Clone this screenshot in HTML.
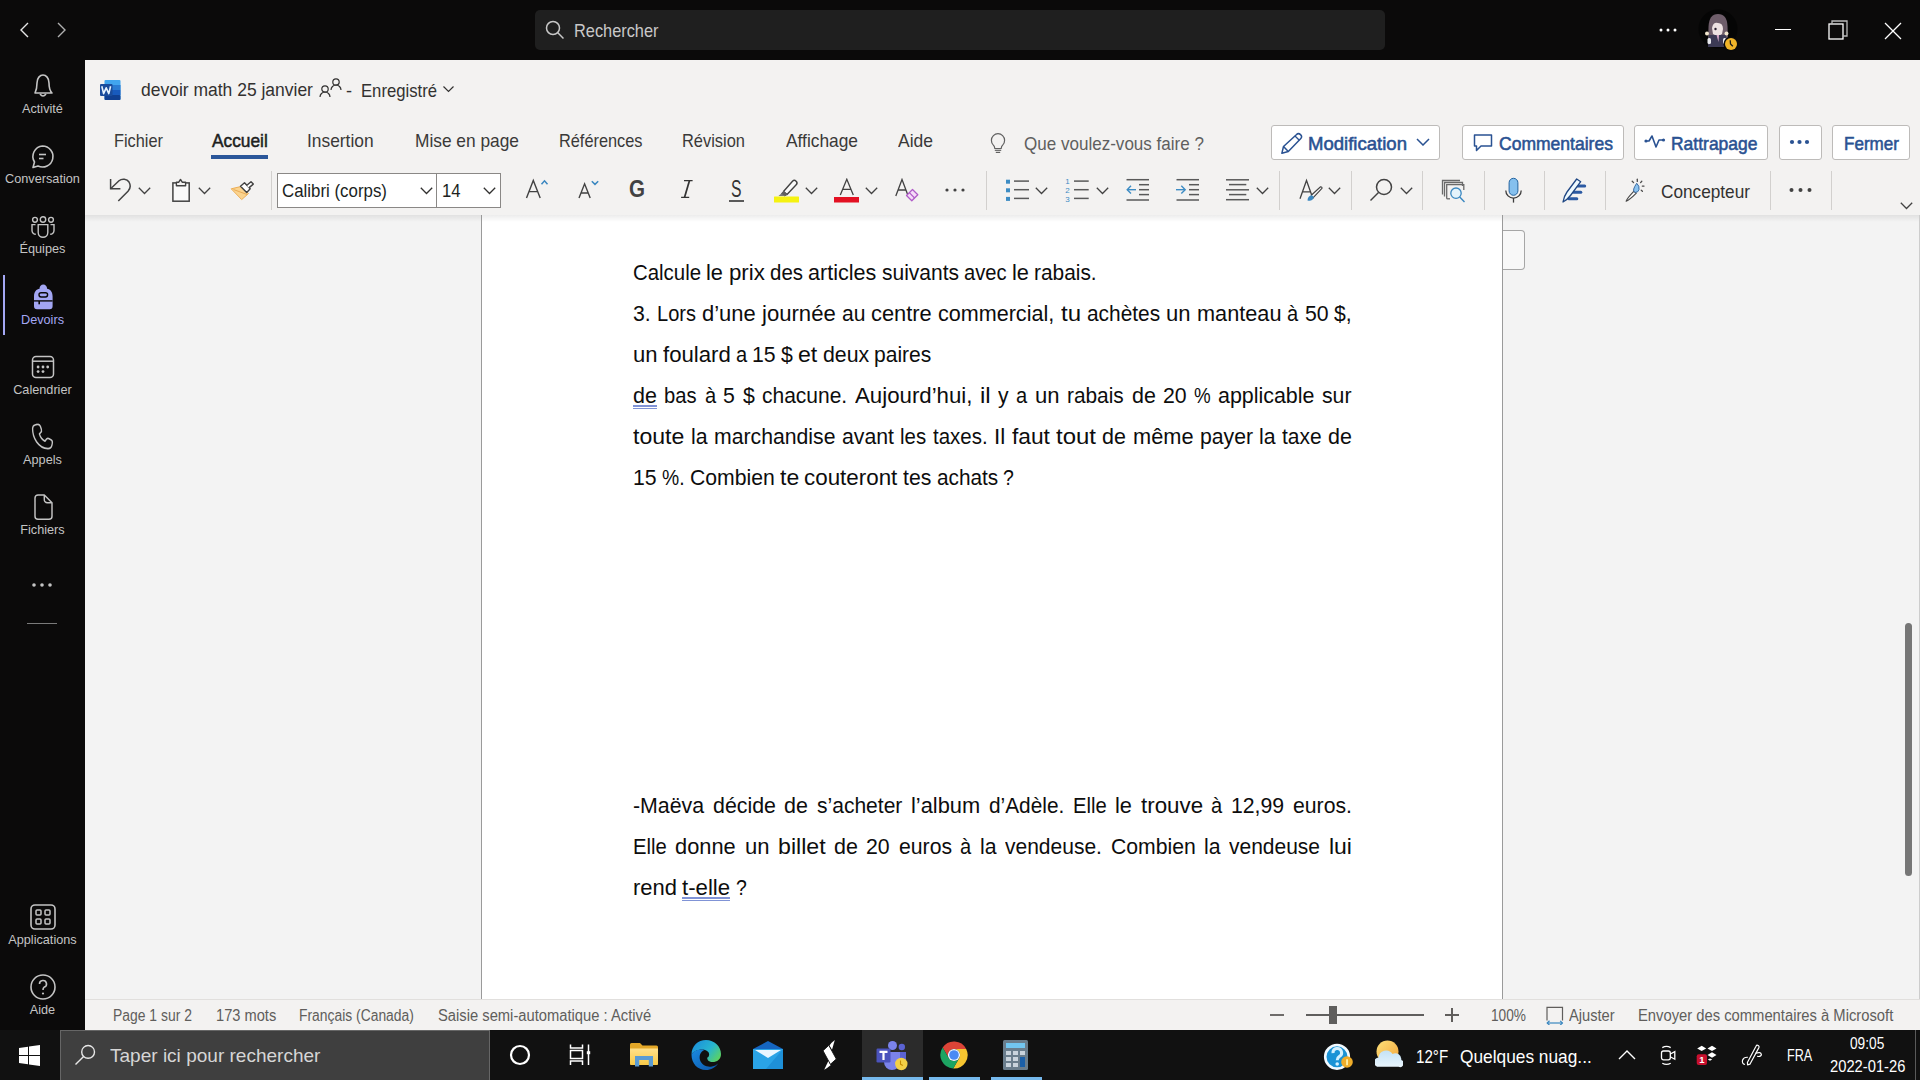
<!DOCTYPE html>
<html><head><meta charset="utf-8"><style>
html,body{margin:0;padding:0;width:1920px;height:1080px;overflow:hidden;background:#0a0a0a;}
body{position:relative;font-family:"Liberation Sans",sans-serif;}
.t{position:absolute;white-space:nowrap;transform-origin:0 0;}
.r{position:absolute;}
</style></head><body>
<div class="r" style="left:0px;top:0px;width:1920px;height:60px;background:#0b0a0a;"></div>
<div class="r" style="left:0px;top:60px;width:85px;height:970px;background:#0b0a0a;"></div>
<div class="r" style="left:85px;top:60px;width:1835px;height:155px;background:#f3f2f1;"></div>
<div class="r" style="left:85px;top:215px;width:1835px;height:784px;background:#f3f3f3;"></div>
<div class="r" style="left:481px;top:215px;width:1022px;height:784px;background:#ffffff;"></div>
<div class="r" style="left:85px;top:215px;width:1835px;height:7px;background:linear-gradient(rgba(0,0,0,0.075),rgba(0,0,0,0));"></div>
<div class="r" style="left:85px;top:999px;width:1835px;height:31px;background:#f3f2f1;"></div>
<div class="r" style="left:85px;top:999px;width:1835px;height:1px;background:#e1dfdd;"></div>
<div class="r" style="left:0px;top:1030px;width:1920px;height:50px;background:#111111;"></div>
<div class="r" style="left:535px;top:10px;width:850px;height:40px;background:#1f1f1f;border-radius:5px;"></div>
<svg class="r" style="left:545px;top:20px" width="20" height="20" viewBox="0 0 20 20"><circle cx="8" cy="8" r="6.5" fill="none" stroke="#c8c8c8" stroke-width="1.5"/><line x1="12.8" y1="12.8" x2="18.5" y2="18.5" stroke="#c8c8c8" stroke-width="1.5"/></svg>
<div class="t" style="left:573.80px;top:21.63px;font-size:18.16px;line-height:18.16px;color:#c8c8c8;transform:scaleX(0.9002);">Rechercher</div>
<svg class="r" style="left:18px;top:20px" width="14" height="20" viewBox="0 0 14 20"><polyline points="10,3 3,10 10,17" fill="none" stroke="#e6e6e6" stroke-width="1.4"/></svg>
<svg class="r" style="left:54px;top:20px" width="14" height="20" viewBox="0 0 14 20"><polyline points="4,3 11,10 4,17" fill="none" stroke="#b0b0b0" stroke-width="1.4"/></svg>
<svg class="r" style="left:1658px;top:26px" width="20" height="8" viewBox="0 0 20 8"><circle cx="3" cy="4" r="1.5" fill="#fff"/><circle cx="10" cy="4" r="1.5" fill="#fff"/><circle cx="17" cy="4" r="1.5" fill="#fff"/></svg>
<svg class="r" style="left:1698px;top:9px" width="40" height="40" viewBox="0 0 40 40"><circle cx="20" cy="20" r="19.5" fill="#050505"/><path d="M10 36 L10.5 18 Q11 5 20 5 Q29 5 29.5 17 L30 30 L26 36 Z" fill="#6e5d6a"/><path d="M14 19 Q15 13 20 14 Q25 14 25 20 L24 25 Q20 28 15 25 Z" fill="#eee2e2"/><circle cx="17.5" cy="20" r="1.2" fill="#2a2030"/><path d="M10 38 L11 26 L28 26 L29 38 Z" fill="#3c3a55"/><path d="M18.5 26 L21 26 L20.5 33 Z" fill="#d6a8c8"/><circle cx="9" cy="24.5" r="2" fill="#f2e6cf"/><circle cx="28.5" cy="24.5" r="2" fill="#f2e6cf"/><rect x="9.5" y="29" width="3.5" height="6" rx="1.5" fill="#e9e9ee"/><rect x="25" y="29" width="3.5" height="6" rx="1.5" fill="#e9e9ee"/></svg>
<svg class="r" style="left:1723px;top:36px" width="16" height="16" viewBox="0 0 16 16"><circle cx="8" cy="8" r="7.5" fill="#0a0a0a"/><circle cx="8" cy="8" r="6" fill="#f0b429"/><polyline points="7.2,4.2 7.5,8 9.8,10.2" fill="none" stroke="#1a1a1a" stroke-width="1.3"/></svg>
<div class="r" style="left:1775px;top:29px;width:16px;height:1px;background:#ffffff;"></div>
<svg class="r" style="left:1828px;top:20px" width="21" height="21" viewBox="0 0 21 21"><rect x="1" y="4" width="14" height="15" fill="none" stroke="#fff" stroke-width="1.3"/><path d="M4 4 V1 H19 V16 H15" fill="none" stroke="#bbb" stroke-width="1.3"/></svg>
<svg class="r" style="left:1884px;top:22px" width="18" height="18" viewBox="0 0 18 18"><line x1="1" y1="1" x2="17" y2="17" stroke="#fff" stroke-width="1.3"/><line x1="17" y1="1" x2="1" y2="17" stroke="#fff" stroke-width="1.3"/></svg>
<div class="t" style="left:22.03px;top:103.25px;font-size:12.7px;line-height:12.7px;color:#c4c4c4;">Activité</div>
<div class="t" style="left:5.08px;top:173.25px;font-size:12.7px;line-height:12.7px;color:#c4c4c4;">Conversation</div>
<div class="t" style="left:19.55px;top:243.25px;font-size:12.7px;line-height:12.7px;color:#c4c4c4;">Équipes</div>
<div class="t" style="left:20.97px;top:313.55px;font-size:12.7px;line-height:12.7px;color:#a4a7f4;">Devoirs</div>
<div class="t" style="left:13.20px;top:383.55px;font-size:12.7px;line-height:12.7px;color:#c4c4c4;">Calendrier</div>
<div class="t" style="left:23.08px;top:453.55px;font-size:12.7px;line-height:12.7px;color:#c4c4c4;">Appels</div>
<div class="t" style="left:20.27px;top:523.55px;font-size:12.7px;line-height:12.7px;color:#c4c4c4;">Fichiers</div>
<div class="t" style="left:8.26px;top:933.75px;font-size:12.7px;line-height:12.7px;color:#c4c4c4;">Applications</div>
<div class="t" style="left:29.79px;top:1003.75px;font-size:12.7px;line-height:12.7px;color:#c4c4c4;">Aide</div>
<div class="r" style="left:3px;top:275px;width:2px;height:60px;background:#a4a7f4;"></div>
<svg class="r" style="left:31px;top:73px" width="24" height="26" viewBox="0 0 24 26"><path d="M4 20 C5 18 6 16 6 10 C6 5 9 2 12 2 C15 2 18 5 18 10 C18 16 19 18 21 20 Z" fill="none" stroke="#c4c4c4" stroke-width="1.6" stroke-linejoin="round"/><path d="M9 21 Q12 25 15 21" fill="none" stroke="#c4c4c4" stroke-width="1.6"/></svg>
<svg class="r" style="left:30px;top:144px" width="25" height="26" viewBox="0 0 25 26"><path d="M12.5 2 A10.5 10.5 0 1 1 8 22 L3 23.5 L4.5 18 A10.5 10.5 0 0 1 12.5 2 Z" fill="none" stroke="#c4c4c4" stroke-width="1.6" stroke-linejoin="round"/><line x1="9" y1="10.5" x2="16" y2="10.5" stroke="#c4c4c4" stroke-width="1.6"/><line x1="9" y1="14.5" x2="13.5" y2="14.5" stroke="#c4c4c4" stroke-width="1.6"/></svg>
<svg class="r" style="left:29px;top:214px" width="28" height="26" viewBox="0 0 28 26"><circle cx="6" cy="5.8" r="2.4" fill="none" stroke="#c4c4c4" stroke-width="1.4"/><circle cx="14" cy="5.5" r="2.7" fill="none" stroke="#c4c4c4" stroke-width="1.4"/><circle cx="22" cy="5.8" r="2.4" fill="none" stroke="#c4c4c4" stroke-width="1.4"/><path d="M9.2 10.6 H18.8 V18.5 A4.8 4.8 0 0 1 9.2 18.5 Z" fill="none" stroke="#c4c4c4" stroke-width="1.4"/><path d="M6.5 10.6 H3 V16.5 A3.8 3.8 0 0 0 6.8 20.3" fill="none" stroke="#c4c4c4" stroke-width="1.4"/><path d="M21.5 10.6 H25 V16.5 A3.8 3.8 0 0 1 21.2 20.3" fill="none" stroke="#c4c4c4" stroke-width="1.4"/></svg>
<svg class="r" style="left:33px;top:283px" width="21" height="27" viewBox="0 0 21 27"><path d="M1 13.5 C1 8.5 3.5 6.3 6.5 5.8 C6.5 3.2 8.2 1.5 10.3 1.5 C12.4 1.5 14.1 3.2 14.1 5.8 C17.1 6.3 19.6 8.5 19.6 13.5 V23.3 A3 3 0 0 1 16.6 26.3 H4 A3 3 0 0 1 1 23.3 Z" fill="#a3a6f3"/><rect x="6" y="9.7" width="8.6" height="4.3" rx="2.15" fill="#a3a6f3" stroke="#0b0a0a" stroke-width="1.4"/><rect x="1" y="17.2" width="18.6" height="1.4" fill="#0b0a0a"/><rect x="5.4" y="18" width="1.6" height="3.3" fill="#0b0a0a"/></svg>
<svg class="r" style="left:31px;top:355px" width="24" height="24" viewBox="0 0 24 24"><rect x="1.5" y="1.5" width="21" height="21" rx="3.5" fill="none" stroke="#c4c4c4" stroke-width="1.5"/><line x1="1.5" y1="6.2" x2="22.5" y2="6.2" stroke="#c4c4c4" stroke-width="1.5"/><circle cx="7.1" cy="12" r="1.4" fill="#c4c4c4"/><circle cx="12" cy="12" r="1.4" fill="#c4c4c4"/><circle cx="16.7" cy="12" r="1.4" fill="#c4c4c4"/><circle cx="7.1" cy="16.6" r="1.4" fill="#c4c4c4"/><circle cx="12" cy="16.6" r="1.4" fill="#c4c4c4"/></svg>
<svg class="r" style="left:30px;top:422px" width="24" height="30" viewBox="0 0 24 30"><g transform="translate(-0.5,-1.6) scale(1,1.27)"><path d="M7.5 3.2 Q10 2.6 10.9 4.7 L11.9 7.1 Q12.4 8.6 11.1 9.6 L9.9 10.7 Q10.6 12.6 12.1 14.1 Q13.6 15.6 15.5 16.3 L16.6 15.1 Q17.6 13.8 19.1 14.3 L21.4 15.3 Q23.3 16.1 22.8 18.1 L22.4 19.6 Q21.7 22.3 18.5 22.3 Q11.5 21.9 7.1 16.9 Q3.1 12.4 3.1 6.6 Q3.1 4.1 5.5 3.6 Z" fill="none" stroke="#c4c4c4" stroke-width="1.35" stroke-linejoin="round"/></g></svg>
<svg class="r" style="left:32px;top:494px" width="22" height="27" viewBox="0 0 22 27"><path d="M3 4 A3 3 0 0 1 6 1 H12.3 L20 8.8 V22.2 A3 3 0 0 1 17 25.2 H6 A3 3 0 0 1 3 22.2 Z" fill="none" stroke="#c4c4c4" stroke-width="1.45" stroke-linejoin="round"/><path d="M12.3 1 V5.6 A3 3 0 0 0 15.3 8.8 H20" fill="none" stroke="#c4c4c4" stroke-width="1.45"/></svg>
<svg class="r" style="left:32px;top:581px" width="22" height="8" viewBox="0 0 22 8"><circle cx="2" cy="4" r="1.8" fill="#c4c4c4"/><circle cx="10" cy="4" r="1.8" fill="#c4c4c4"/><circle cx="18" cy="4" r="1.8" fill="#c4c4c4"/></svg>
<div class="r" style="left:27px;top:623px;width:30px;height:1px;background:#7a7a7a;"></div>
<svg class="r" style="left:30px;top:904px" width="26" height="26" viewBox="0 0 26 26"><rect x="1" y="1" width="24" height="24" rx="4" fill="none" stroke="#c4c4c4" stroke-width="1.6"/><rect x="6" y="6" width="5" height="5" rx="1" fill="none" stroke="#c4c4c4" stroke-width="1.5"/><rect x="15" y="6" width="5" height="5" rx="1" fill="none" stroke="#c4c4c4" stroke-width="1.5"/><rect x="6" y="15" width="5" height="5" rx="1" fill="none" stroke="#c4c4c4" stroke-width="1.5"/><rect x="15" y="15" width="5" height="5" rx="1" fill="none" stroke="#c4c4c4" stroke-width="1.5"/></svg>
<svg class="r" style="left:30px;top:974px" width="26" height="26" viewBox="0 0 26 26"><circle cx="13" cy="13" r="12" fill="none" stroke="#c4c4c4" stroke-width="1.6"/><path d="M9.5 10 A3.5 3.5 0 1 1 14 13.3 Q13 14 13 16" fill="none" stroke="#c4c4c4" stroke-width="1.6"/><circle cx="13" cy="19.5" r="1.1" fill="#c4c4c4"/></svg>
<svg class="r" style="left:100px;top:80px" width="21" height="20" viewBox="0 0 21 20"><rect x="4.5" y="0" width="16" height="20" rx="1" fill="#41a5ee"/><rect x="4.5" y="5" width="16" height="5" fill="#2b7cd3"/><rect x="4.5" y="10" width="16" height="5" fill="#185abd"/><rect x="4.5" y="15" width="16" height="5" rx="1" fill="#103f91"/><rect x="0" y="4" width="12.5" height="12" rx="1" fill="#1a4c9c"/><path d="M1.8 6.2 L3.6 13.6 L6.2 7.8 L8.8 13.6 L10.6 6.2" fill="none" stroke="#e8f4ff" stroke-width="1.6" stroke-linejoin="round"/></svg>
<div class="t" style="left:141.00px;top:81.44px;font-size:18.85px;line-height:18.85px;color:#323130;transform:scaleX(0.9274);">devoir math 25 janvier</div>
<svg class="r" style="left:319px;top:77px" width="23" height="21" viewBox="0 0 23 21"><circle cx="6" cy="12" r="3.2" fill="none" stroke="#323130" stroke-width="1.2"/><path d="M1 20 A5 5 0 0 1 11 20" fill="none" stroke="#323130" stroke-width="1.2"/><circle cx="17" cy="5" r="3.2" fill="none" stroke="#323130" stroke-width="1.2"/><path d="M12 13 A5 5 0 0 1 22 13" fill="none" stroke="#323130" stroke-width="1.2"/></svg>
<div class="t" style="left:346.00px;top:82.03px;font-size:18.16px;line-height:18.16px;color:#323130;">-</div>
<div class="t" style="left:360.50px;top:82.03px;font-size:18.16px;line-height:18.16px;color:#323130;transform:scaleX(0.9182);">Enregistré</div>
<svg class="r" style="left:443px;top:86px" width="11" height="7" viewBox="0 0 11 7"><polyline points="0.5,0.5 5.5,5.5 10.5,0.5" fill="none" stroke="#323130" stroke-width="1.2"/></svg>
<div class="t" style="left:113.90px;top:131.63px;font-size:18.16px;line-height:18.16px;color:#3a3938;transform:scaleX(0.8992);">Fichier</div>
<div class="t" style="left:211.60px;top:131.63px;font-size:18.16px;line-height:18.16px;color:#201f1e;transform:scaleX(0.9531);-webkit-text-stroke:0.5px #201f1e;">Accueil</div>
<div class="r" style="left:211px;top:155px;width:57px;height:4px;background:#2b579a;"></div>
<div class="t" style="left:307.40px;top:131.63px;font-size:18.16px;line-height:18.16px;color:#3a3938;transform:scaleX(0.9562);">Insertion</div>
<div class="t" style="left:415.00px;top:131.63px;font-size:18.16px;line-height:18.16px;color:#3a3938;transform:scaleX(0.9538);">Mise en page</div>
<div class="t" style="left:558.50px;top:131.63px;font-size:18.16px;line-height:18.16px;color:#3a3938;transform:scaleX(0.8991);">Références</div>
<div class="t" style="left:682.00px;top:131.63px;font-size:18.16px;line-height:18.16px;color:#3a3938;transform:scaleX(0.9046);">Révision</div>
<div class="t" style="left:786.00px;top:131.63px;font-size:18.16px;line-height:18.16px;color:#3a3938;transform:scaleX(0.9550);">Affichage</div>
<div class="t" style="left:898.00px;top:131.63px;font-size:18.16px;line-height:18.16px;color:#3a3938;transform:scaleX(0.9629);">Aide</div>
<svg class="r" style="left:990px;top:133px" width="16" height="21" viewBox="0 0 16 21"><path d="M3.2 11.8 A6.6 6.6 0 1 1 12.8 11.8 Q11.3 13.3 11.2 15.5 H4.8 Q4.7 13.3 3.2 11.8 Z" fill="none" stroke="#616161" stroke-width="1.2" stroke-linejoin="round"/><line x1="4.8" y1="17.3" x2="11.2" y2="17.3" stroke="#616161" stroke-width="1.2"/><line x1="5.8" y1="19.4" x2="10.2" y2="19.4" stroke="#616161" stroke-width="1.2"/></svg>
<div class="t" style="left:1023.80px;top:134.64px;font-size:18.85px;line-height:18.85px;color:#5f5f5f;transform:scaleX(0.9042);">Que voulez-vous faire ?</div>
<div class="r" style="left:1271px;top:125px;width:169px;height:35px;background:#ffffff;box-sizing:border-box;border:1px solid #bdbbb9;border-radius:3px;"></div>
<div class="r" style="left:1462px;top:125px;width:162px;height:35px;background:#ffffff;box-sizing:border-box;border:1px solid #bdbbb9;border-radius:3px;"></div>
<div class="r" style="left:1634px;top:125px;width:134px;height:35px;background:#ffffff;box-sizing:border-box;border:1px solid #bdbbb9;border-radius:3px;"></div>
<div class="r" style="left:1779px;top:125px;width:43px;height:35px;background:#ffffff;box-sizing:border-box;border:1px solid #bdbbb9;border-radius:3px;"></div>
<div class="r" style="left:1832px;top:125px;width:78px;height:35px;background:#ffffff;box-sizing:border-box;border:1px solid #bdbbb9;border-radius:3px;"></div>
<div class="t" style="left:1308.40px;top:134.63px;font-size:18.16px;line-height:18.16px;color:#2a5292;transform:scaleX(1.0216);-webkit-text-stroke:0.55px #2a5292;">Modification</div>
<svg class="r" style="left:1281px;top:132px" width="22" height="23" viewBox="0 0 22 23"><path d="M0.9 21.2 L2.5 14.5 L15.3 2.7 A2.9 2.9 0 0 1 19.6 6.8 L7.3 19.5 Z" fill="none" stroke="#2a5292" stroke-width="1.5" stroke-linejoin="round"/><line x1="2.5" y1="14.5" x2="7.3" y2="19.5" stroke="#2a5292" stroke-width="1.5"/><line x1="14" y1="4" x2="18.3" y2="8.3" stroke="#2a5292" stroke-width="1.3"/></svg>
<svg class="r" style="left:1416px;top:138px" width="14" height="8" viewBox="0 0 14 8"><polyline points="1,1 7,7 13,1" fill="none" stroke="#2a5292" stroke-width="1.5"/></svg>
<div class="t" style="left:1498.50px;top:134.63px;font-size:18.16px;line-height:18.16px;color:#2a5292;transform:scaleX(0.9654);-webkit-text-stroke:0.55px #2a5292;">Commentaires</div>
<svg class="r" style="left:1473px;top:133px" width="20" height="20" viewBox="0 0 20 20"><path d="M1.5 2 H18.5 V13 H8 L3.5 17.5 V13 H1.5 Z" fill="none" stroke="#2a5292" stroke-width="1.5" stroke-linejoin="round"/></svg>
<div class="t" style="left:1671.00px;top:134.63px;font-size:18.16px;line-height:18.16px;color:#2a5292;transform:scaleX(0.9627);-webkit-text-stroke:0.55px #2a5292;">Rattrapage</div>
<svg class="r" style="left:1644px;top:134px" width="22" height="16" viewBox="0 0 22 16"><polyline points="2,7 5,7 8,2 12,13 15,6 19,6" fill="none" stroke="#2a5292" stroke-width="1.6" stroke-linejoin="round"/><circle cx="2" cy="7" r="1.6" fill="#2a5292"/><circle cx="19.5" cy="6" r="1.6" fill="#2a5292"/></svg>
<svg class="r" style="left:1789px;top:138px" width="21" height="8" viewBox="0 0 21 8"><circle cx="3" cy="4" r="2.1" fill="#2a5292"/><circle cx="10.5" cy="4" r="2.1" fill="#2a5292"/><circle cx="18" cy="4" r="2.1" fill="#2a5292"/></svg>
<div class="t" style="left:1844.00px;top:134.63px;font-size:18.16px;line-height:18.16px;color:#2a5292;transform:scaleX(0.9399);-webkit-text-stroke:0.55px #2a5292;">Fermer</div>
<div class="r" style="left:271px;top:171px;width:1px;height:39px;background:#d2d0ce;"></div>
<div class="r" style="left:986px;top:171px;width:1px;height:39px;background:#d2d0ce;"></div>
<div class="r" style="left:1279px;top:171px;width:1px;height:39px;background:#d2d0ce;"></div>
<div class="r" style="left:1351px;top:171px;width:1px;height:39px;background:#d2d0ce;"></div>
<div class="r" style="left:1422px;top:171px;width:1px;height:39px;background:#d2d0ce;"></div>
<div class="r" style="left:1484px;top:171px;width:1px;height:39px;background:#d2d0ce;"></div>
<div class="r" style="left:1544px;top:171px;width:1px;height:39px;background:#d2d0ce;"></div>
<div class="r" style="left:1605px;top:171px;width:1px;height:39px;background:#d2d0ce;"></div>
<div class="r" style="left:1770px;top:171px;width:1px;height:39px;background:#d2d0ce;"></div>
<div class="r" style="left:1831px;top:171px;width:1px;height:39px;background:#d2d0ce;"></div>
<svg class="r" style="left:108px;top:178px" width="24" height="25" viewBox="0 0 24 25"><path d="M2.6 1 V10.8 H12.4" fill="none" stroke="#424242" stroke-width="1.5"/><path d="M2.6 10.8 L11 2.8 C14 0.2 19 0.8 21 4 C23 7.5 22.5 10.5 20 13.3 L10.3 23" fill="none" stroke="#424242" stroke-width="1.5"/></svg>
<svg class="r" style="left:138px;top:187px" width="13" height="8" viewBox="0 0 13 8"><polyline points="0.8,0.8 6.5,6.5 12.2,0.8" fill="none" stroke="#424242" stroke-width="1.3"/></svg>
<svg class="r" style="left:171px;top:178px" width="20" height="25" viewBox="0 0 20 25"><rect x="1.9" y="4.9" width="16.3" height="18.3" fill="#f9f9f9" stroke="#424242" stroke-width="1.5"/><path d="M5.4 7.8 V4.3 H7.6 L9.5 1.5 L11.4 4.3 H14.6 V7.8 Z" fill="#f3f2f1" stroke="#424242" stroke-width="1.4" stroke-linejoin="round"/></svg>
<svg class="r" style="left:198px;top:187px" width="13" height="8" viewBox="0 0 13 8"><polyline points="0.8,0.8 6.5,6.5 12.2,0.8" fill="none" stroke="#424242" stroke-width="1.3"/></svg>
<svg class="r" style="left:230px;top:180px" width="25" height="22" viewBox="0 0 25 22"><path d="M1.2 8.8 L11 6.5 L18.5 13.5 L11.7 19.6 Z" fill="#fbd48f" stroke="#eaa748" stroke-width="0.9" stroke-linejoin="round"/><path d="M3.5 9.5 L17 14.5" stroke="#e6a650" stroke-width="0.9"/><path d="M10.5 6.2 L14.5 2.8 L20.2 8.8 L16.7 12.4 Z" fill="#ffffff" stroke="#424242" stroke-width="1.4" stroke-linejoin="round"/><path d="M16.6 5.6 L21 1.7 L23.3 4.1 L18.8 7.9" fill="#ffffff" stroke="#424242" stroke-width="1.4" stroke-linejoin="round"/></svg>
<div class="r" style="left:277px;top:173px;width:160px;height:35px;background:#ffffff;box-sizing:border-box;border:1px solid #8a8886;"></div>
<div class="r" style="left:436px;top:173px;width:65px;height:35px;background:#ffffff;box-sizing:border-box;border:1px solid #8a8886;"></div>
<div class="t" style="left:281.90px;top:181.63px;font-size:18.16px;line-height:18.16px;color:#201f1e;transform:scaleX(0.9291);">Calibri (corps)</div>
<svg class="r" style="left:420px;top:187px" width="13" height="8" viewBox="0 0 13 8"><polyline points="0.8,0.8 6.5,6.5 12.2,0.8" fill="none" stroke="#323130" stroke-width="1.3"/></svg>
<div class="t" style="left:441.50px;top:181.63px;font-size:18.16px;line-height:18.16px;color:#201f1e;transform:scaleX(0.9158);">14</div>
<svg class="r" style="left:483px;top:187px" width="13" height="8" viewBox="0 0 13 8"><polyline points="0.8,0.8 6.5,6.5 12.2,0.8" fill="none" stroke="#323130" stroke-width="1.3"/></svg>
<svg class="r" style="left:524px;top:178px" width="28" height="22" viewBox="0 0 28 22"><path d="M2.5 20 L9.3 2.5 L16.2 20 M5.2 13.6 H13.5" fill="none" stroke="#424242" stroke-width="1.4"/><polyline points="17.5,6.3 20.5,2.8 23.5,6.3" fill="none" stroke="#3a87c0" stroke-width="1.5"/></svg>
<svg class="r" style="left:576px;top:178px" width="26" height="22" viewBox="0 0 26 22"><path d="M3 20 L8.6 5.8 L14.2 20 M5.2 15 H12" fill="none" stroke="#424242" stroke-width="1.4"/><polyline points="15.8,3.2 19,6.4 22.2,3.2" fill="none" stroke="#3a87c0" stroke-width="1.5"/></svg>
<div class="t" style="left:628.50px;top:177.61px;font-size:23.5px;line-height:23.5px;color:#424242;font-weight:700;transform:scaleX(0.8753);">G</div>
<svg class="r" style="left:678px;top:178px" width="18" height="22" viewBox="0 0 18 22"><path d="M6 2.6 H14.6 M3.1 19.4 H11.2" fill="none" stroke="#333" stroke-width="1.3"/><path d="M10.6 2.6 L12.4 2.6 L7.4 19.4 L5.6 19.4 Z" fill="#333"/></svg>
<div class="t" style="left:731.00px;top:178.18px;font-size:23.18px;line-height:23.18px;color:#333333;transform:scaleX(0.6791);">S</div>
<div class="r" style="left:729px;top:200.3px;width:15px;height:1.7px;background:#5a5a5a;"></div>
<svg class="r" style="left:773px;top:178px" width="27" height="25" viewBox="0 0 27 25"><path d="M10.5 13.5 L19.5 3.3 A2.3 2.3 0 0 1 23.2 6.8 L14 16.6 Z" fill="#fafafa" stroke="#424242" stroke-width="1.4" stroke-linejoin="round"/><path d="M10.5 13.5 L14 16.6 L11.5 18 L8.3 15.5 Z" fill="#5f5f5f" stroke="#5f5f5f" stroke-width="1"/><path d="M8.3 15.5 L5.5 18 L11.5 18" fill="#7a7a7a"/><rect x="1" y="18.5" width="25" height="6" rx="0.5" fill="#f5f211"/></svg>
<svg class="r" style="left:805px;top:187px" width="13" height="8" viewBox="0 0 13 8"><polyline points="0.8,0.8 6.5,6.5 12.2,0.8" fill="none" stroke="#424242" stroke-width="1.3"/></svg>
<svg class="r" style="left:834px;top:178px" width="25" height="25" viewBox="0 0 25 25"><path d="M6.3 17 L12.8 1.3 L19.3 17 M8.8 11.3 H16.8" fill="none" stroke="#424242" stroke-width="1.3"/><rect x="0" y="19" width="25" height="5.5" fill="#e31123"/></svg>
<svg class="r" style="left:865px;top:187px" width="13" height="8" viewBox="0 0 13 8"><polyline points="0.8,0.8 6.5,6.5 12.2,0.8" fill="none" stroke="#424242" stroke-width="1.3"/></svg>
<svg class="r" style="left:894px;top:178px" width="26" height="25" viewBox="0 0 26 25"><path d="M1.8 18 L8 1.5 L14.2 18 M4.2 12 H11.8" fill="none" stroke="#424242" stroke-width="1.3"/><path d="M12.5 17.5 L18.5 11.5 L23.8 16.8 L17.8 22.8 Z" fill="#f5dcf8" stroke="#b05cc8" stroke-width="1.3" stroke-linejoin="round"/><path d="M15.3 14.7 L20.6 20" stroke="#b05cc8" stroke-width="1.2"/></svg>
<svg class="r" style="left:945px;top:187px" width="22" height="6" viewBox="0 0 22 6"><circle cx="2" cy="3" r="1.6" fill="#424242"/><circle cx="10" cy="3" r="1.6" fill="#424242"/><circle cx="18" cy="3" r="1.6" fill="#424242"/></svg>
<svg class="r" style="left:1005px;top:178px" width="25" height="24" viewBox="0 0 25 24"><rect x="1" y="1.7" width="4" height="4" fill="#3d8cc4"/><rect x="1" y="10.3" width="4" height="4" fill="#3d8cc4"/><rect x="1" y="18.9" width="4" height="4" fill="#3d8cc4"/><g stroke="#595959" stroke-width="1.5"><line x1="9" y1="3.1" x2="24" y2="3.1"/><line x1="9" y1="11.7" x2="24" y2="11.7"/><line x1="9" y1="20.4" x2="24" y2="20.4"/></g></svg>
<svg class="r" style="left:1035px;top:187px" width="13" height="8" viewBox="0 0 13 8"><polyline points="0.8,0.8 6.5,6.5 12.2,0.8" fill="none" stroke="#424242" stroke-width="1.3"/></svg>
<svg class="r" style="left:1064px;top:177px" width="25" height="26" viewBox="0 0 25 26"><g font-family="Liberation Sans" font-size="8" fill="#3d8cc4"><text x="1.3" y="7">1</text><text x="1.3" y="15.5">2</text><text x="1.3" y="24.5">3</text></g><g stroke="#595959" stroke-width="1.5"><line x1="10" y1="4.1" x2="24.7" y2="4.1"/><line x1="10" y1="12.7" x2="24.7" y2="12.7"/><line x1="10" y1="21.4" x2="24.7" y2="21.4"/></g></svg>
<svg class="r" style="left:1095.5px;top:187px" width="13" height="8" viewBox="0 0 13 8"><polyline points="0.8,0.8 6.5,6.5 12.2,0.8" fill="none" stroke="#424242" stroke-width="1.3"/></svg>
<svg class="r" style="left:1126px;top:178px" width="24" height="24" viewBox="0 0 24 24"><g stroke="#595959" stroke-width="1.5"><line x1="0.5" y1="1.7" x2="23" y2="1.7"/><line x1="13" y1="6.7" x2="23" y2="6.7"/><line x1="13" y1="11.7" x2="23" y2="11.7"/><line x1="13" y1="16.6" x2="23" y2="16.6"/><line x1="0.5" y1="22" x2="23" y2="22"/></g><polyline points="5,7.8 1.2,11.7 5,15.6" fill="none" stroke="#3d8cc4" stroke-width="1.4"/><line x1="1.5" y1="11.7" x2="10" y2="11.7" stroke="#3d8cc4" stroke-width="1.4"/></svg>
<svg class="r" style="left:1176px;top:178px" width="24" height="24" viewBox="0 0 24 24"><g stroke="#595959" stroke-width="1.5"><line x1="0.5" y1="1.7" x2="23" y2="1.7"/><line x1="13" y1="6.7" x2="23" y2="6.7"/><line x1="13" y1="11.7" x2="23" y2="11.7"/><line x1="13" y1="16.6" x2="23" y2="16.6"/><line x1="0.5" y1="22" x2="23" y2="22"/></g><polyline points="5.3,7.8 9.2,11.7 5.3,15.6" fill="none" stroke="#3d8cc4" stroke-width="1.4"/><line x1="0" y1="11.7" x2="9" y2="11.7" stroke="#3d8cc4" stroke-width="1.4"/></svg>
<svg class="r" style="left:1225px;top:178px" width="25" height="24" viewBox="0 0 25 24"><g stroke="#595959" stroke-width="1.5"><line x1="1" y1="1.8" x2="24" y2="1.8"/><line x1="4" y1="6.6" x2="21.3" y2="6.6"/><line x1="1" y1="11.8" x2="24" y2="11.8"/><line x1="4" y1="16.6" x2="21.3" y2="16.6"/><line x1="1" y1="21.7" x2="24" y2="21.7"/></g></svg>
<svg class="r" style="left:1255.5px;top:187px" width="13" height="8" viewBox="0 0 13 8"><polyline points="0.8,0.8 6.5,6.5 12.2,0.8" fill="none" stroke="#424242" stroke-width="1.3"/></svg>
<svg class="r" style="left:1299px;top:178px" width="26" height="26" viewBox="0 0 26 26"><path d="M1 20.8 L7.5 2.5 L14 20.8 M3.6 13.8 H11.2" fill="none" stroke="#424242" stroke-width="1.3"/><path d="M12 17.5 L21.5 8.8 A1.3 1.3 0 0 1 23 10.3 L14 19.8" fill="#f7f7f7" stroke="#424242" stroke-width="1.2"/><path d="M8.5 22.5 Q8.8 18 12.2 17.2 Q14.8 17.6 14.8 19.8 Q13 23.8 8.5 22.5 Z" fill="#3a87c0"/></svg>
<svg class="r" style="left:1327.5px;top:187px" width="13" height="8" viewBox="0 0 13 8"><polyline points="0.8,0.8 6.5,6.5 12.2,0.8" fill="none" stroke="#424242" stroke-width="1.3"/></svg>
<svg class="r" style="left:1369px;top:178px" width="25" height="25" viewBox="0 0 25 25"><circle cx="15" cy="9" r="7.5" fill="none" stroke="#424242" stroke-width="1.5"/><line x1="9.5" y1="14.5" x2="1.5" y2="22.5" stroke="#424242" stroke-width="1.5"/></svg>
<svg class="r" style="left:1400px;top:187px" width="13" height="8" viewBox="0 0 13 8"><polyline points="0.8,0.8 6.5,6.5 12.2,0.8" fill="none" stroke="#424242" stroke-width="1.3"/></svg>
<svg class="r" style="left:1440px;top:178px" width="27" height="26" viewBox="0 0 27 26"><path d="M2.5 16.5 V2.5 H20" fill="none" stroke="#6a6a6a" stroke-width="1.3"/><path d="M4.5 18.5 V4.5 H22.5 V8" fill="none" stroke="#6a6a6a" stroke-width="1.3"/><path d="M6.7 20.8 V6.6 H23.8 V12" fill="none" stroke="#6a6a6a" stroke-width="1.3"/><path d="M6.7 20.8 H10" stroke="#6a6a6a" stroke-width="1.3"/><circle cx="16" cy="15.2" r="5.2" fill="#e4f3fb" stroke="#3a87c0" stroke-width="1.3"/><line x1="19.7" y1="19" x2="24.5" y2="24" stroke="#3a87c0" stroke-width="1.4"/></svg>
<svg class="r" style="left:1504px;top:177px" width="19" height="27" viewBox="0 0 19 27"><rect x="5.1" y="1.3" width="8.8" height="17" rx="4.4" fill="#85c0ee" stroke="#2464a0" stroke-width="1"/><path d="M1.8 13.4 A7.7 7.7 0 0 0 17.2 13.4" fill="none" stroke="#3c3c3c" stroke-width="1.3"/><line x1="9.5" y1="21" x2="9.5" y2="25.6" stroke="#3c3c3c" stroke-width="1.3"/></svg>
<svg class="r" style="left:1561px;top:177px" width="27" height="28" viewBox="0 0 27 28"><g stroke="#2b5aa3" stroke-width="3" stroke-linecap="round"><line x1="16.5" y1="9" x2="23.7" y2="9"/><line x1="12.5" y1="15.3" x2="19.8" y2="15.3"/><line x1="8" y1="21.7" x2="15.8" y2="21.7"/></g><path d="M2 25 Q2.8 19.5 6 15 L15.7 2 L19.7 4.7 L9.5 18.5 Q6.5 22.5 2 25 Z" fill="#eefaff" stroke="#1f4784" stroke-width="1.3" stroke-linejoin="round"/></svg>
<svg class="r" style="left:1624px;top:178px" width="24" height="26" viewBox="0 0 24 26"><path d="M2.2 23.2 Q3 20.5 10 13.2 L12.3 15.2 Q5.5 22 2.2 23.2 Z" fill="#ffffff" stroke="#4a4a4a" stroke-width="1.2" stroke-linejoin="round"/><path d="M12.7 5.3 Q15.8 8 15 11.6 Q14.2 14.6 11.2 14.4 Q9 13.6 9.7 11 Q10.6 8.3 12.7 5.3 Z" fill="#8cc4f0" stroke="#2e5f9a" stroke-width="0.9"/><g stroke="#4a4a4a" stroke-width="1.3" stroke-linecap="round"><line x1="8.2" y1="3.2" x2="9.6" y2="4.6"/><line x1="13.3" y1="1.2" x2="13.3" y2="3.4"/><line x1="17.8" y1="3.3" x2="16.6" y2="4.6"/><line x1="18.3" y1="8.1" x2="20" y2="8.1"/><line x1="17.2" y1="12.1" x2="18.4" y2="13.3"/></g></svg>
<div class="t" style="left:1661.00px;top:182.63px;font-size:18.16px;line-height:18.16px;color:#323130;transform:scaleX(0.9479);">Concepteur</div>
<svg class="r" style="left:1789px;top:186px" width="24" height="8" viewBox="0 0 24 8"><circle cx="2.5" cy="4" r="2" fill="#424242"/><circle cx="11.5" cy="4" r="2" fill="#424242"/><circle cx="20.5" cy="4" r="2" fill="#424242"/></svg>
<svg class="r" style="left:1900px;top:202px" width="13" height="8" viewBox="0 0 13 8"><polyline points="0.8,0.8 6.5,6.5 12.2,0.8" fill="none" stroke="#424242" stroke-width="1.3"/></svg>
<div class="t" style="left:633.00px;top:262.97px;font-size:21.3px;line-height:21.3px;color:#0d0d0d;transform:scaleX(0.9581);">Calcule</div>
<div class="t" style="left:706.34px;top:262.97px;font-size:21.3px;line-height:21.3px;color:#0d0d0d;transform:scaleX(1.0233);">le</div>
<div class="t" style="left:728.58px;top:262.97px;font-size:21.3px;line-height:21.3px;color:#0d0d0d;transform:scaleX(1.0446);">prix</div>
<div class="t" style="left:769.71px;top:262.97px;font-size:21.3px;line-height:21.3px;color:#0d0d0d;transform:scaleX(0.9607);">des</div>
<div class="t" style="left:807.98px;top:262.97px;font-size:21.3px;line-height:21.3px;color:#0d0d0d;transform:scaleX(1.0118);">articles</div>
<div class="t" style="left:881.52px;top:262.97px;font-size:21.3px;line-height:21.3px;color:#0d0d0d;transform:scaleX(0.9867);">suivants</div>
<div class="t" style="left:963.89px;top:262.97px;font-size:21.3px;line-height:21.3px;color:#0d0d0d;transform:scaleX(0.9463);">avec</div>
<div class="t" style="left:1011.74px;top:262.97px;font-size:21.3px;line-height:21.3px;color:#0d0d0d;transform:scaleX(1.0233);">le</div>
<div class="t" style="left:1033.98px;top:262.97px;font-size:21.3px;line-height:21.3px;color:#0d0d0d;transform:scaleX(0.9798);">rabais.</div>
<div class="t" style="left:633.00px;top:303.97px;font-size:21.3px;line-height:21.3px;color:#0d0d0d;transform:scaleX(0.9973);">3.</div>
<div class="t" style="left:656.85px;top:303.97px;font-size:21.3px;line-height:21.3px;color:#0d0d0d;transform:scaleX(0.9406);">Lors</div>
<div class="t" style="left:701.97px;top:303.97px;font-size:21.3px;line-height:21.3px;color:#0d0d0d;transform:scaleX(1.0303);">d’une</div>
<div class="t" style="left:761.80px;top:303.97px;font-size:21.3px;line-height:21.3px;color:#0d0d0d;transform:scaleX(1.0380);">journée</div>
<div class="t" style="left:841.70px;top:303.97px;font-size:21.3px;line-height:21.3px;color:#0d0d0d;transform:scaleX(0.9891);">au</div>
<div class="t" style="left:871.27px;top:303.97px;font-size:21.3px;line-height:21.3px;color:#0d0d0d;transform:scaleX(1.0265);">centre</div>
<div class="t" style="left:938.18px;top:303.97px;font-size:21.3px;line-height:21.3px;color:#0d0d0d;transform:scaleX(1.0125);">commercial,</div>
<div class="t" style="left:1060.55px;top:303.97px;font-size:21.3px;line-height:21.3px;color:#0d0d0d;transform:scaleX(1.1301);">tu</div>
<div class="t" style="left:1086.76px;top:303.97px;font-size:21.3px;line-height:21.3px;color:#0d0d0d;transform:scaleX(0.9797);">achètes</div>
<div class="t" style="left:1165.99px;top:303.97px;font-size:21.3px;line-height:21.3px;color:#0d0d0d;transform:scaleX(1.0348);">un</div>
<div class="t" style="left:1196.64px;top:303.97px;font-size:21.3px;line-height:21.3px;color:#0d0d0d;transform:scaleX(1.0190);">manteau</div>
<div class="t" style="left:1287.25px;top:303.97px;font-size:21.3px;line-height:21.3px;color:#0d0d0d;transform:scaleX(0.9434);">à</div>
<div class="t" style="left:1304.56px;top:303.97px;font-size:21.3px;line-height:21.3px;color:#0d0d0d;transform:scaleX(0.9983);">50</div>
<div class="t" style="left:1334.35px;top:303.97px;font-size:21.3px;line-height:21.3px;color:#0d0d0d;transform:scaleX(0.9935);">$,</div>
<div class="t" style="left:633.00px;top:344.97px;font-size:21.3px;line-height:21.3px;color:#0d0d0d;transform:scaleX(1.0348);">un</div>
<div class="t" style="left:662.79px;top:344.97px;font-size:21.3px;line-height:21.3px;color:#0d0d0d;transform:scaleX(1.0410);">foulard</div>
<div class="t" style="left:735.87px;top:344.97px;font-size:21.3px;line-height:21.3px;color:#0d0d0d;transform:scaleX(0.9434);">a</div>
<div class="t" style="left:752.32px;top:344.97px;font-size:21.3px;line-height:21.3px;color:#0d0d0d;transform:scaleX(0.9983);">15</div>
<div class="t" style="left:781.25px;top:344.97px;font-size:21.3px;line-height:21.3px;color:#0d0d0d;transform:scaleX(0.9983);">$</div>
<div class="t" style="left:798.35px;top:344.97px;font-size:21.3px;line-height:21.3px;color:#0d0d0d;transform:scaleX(1.0865);">et</div>
<div class="t" style="left:822.92px;top:344.97px;font-size:21.3px;line-height:21.3px;color:#0d0d0d;transform:scaleX(1.0009);">deux</div>
<div class="t" style="left:874.43px;top:344.97px;font-size:21.3px;line-height:21.3px;color:#0d0d0d;transform:scaleX(0.9886);">paires</div>
<div class="t" style="left:633.00px;top:385.97px;font-size:21.3px;line-height:21.3px;color:#0d0d0d;transform:scaleX(1.0074);">de</div>
<div class="t" style="left:664.44px;top:385.97px;font-size:21.3px;line-height:21.3px;color:#0d0d0d;transform:scaleX(0.9481);">bas</div>
<div class="t" style="left:704.57px;top:385.97px;font-size:21.3px;line-height:21.3px;color:#0d0d0d;transform:scaleX(0.9434);">à</div>
<div class="t" style="left:723.32px;top:385.97px;font-size:21.3px;line-height:21.3px;color:#0d0d0d;transform:scaleX(0.9983);">5</div>
<div class="t" style="left:742.72px;top:385.97px;font-size:21.3px;line-height:21.3px;color:#0d0d0d;transform:scaleX(0.9983);">$</div>
<div class="t" style="left:762.12px;top:385.97px;font-size:21.3px;line-height:21.3px;color:#0d0d0d;transform:scaleX(0.9854);">chacune.</div>
<div class="t" style="left:854.87px;top:385.97px;font-size:21.3px;line-height:21.3px;color:#0d0d0d;transform:scaleX(1.0445);">Aujourd’hui,</div>
<div class="t" style="left:979.94px;top:385.97px;font-size:21.3px;line-height:21.3px;color:#0d0d0d;transform:scaleX(1.1315);">il</div>
<div class="t" style="left:998.22px;top:385.97px;font-size:21.3px;line-height:21.3px;color:#0d0d0d;transform:scaleX(0.9917);">y</div>
<div class="t" style="left:1016.36px;top:385.97px;font-size:21.3px;line-height:21.3px;color:#0d0d0d;transform:scaleX(0.9434);">a</div>
<div class="t" style="left:1035.11px;top:385.97px;font-size:21.3px;line-height:21.3px;color:#0d0d0d;transform:scaleX(1.0348);">un</div>
<div class="t" style="left:1067.20px;top:385.97px;font-size:21.3px;line-height:21.3px;color:#0d0d0d;transform:scaleX(0.9782);">rabais</div>
<div class="t" style="left:1131.52px;top:385.97px;font-size:21.3px;line-height:21.3px;color:#0d0d0d;transform:scaleX(1.0074);">de</div>
<div class="t" style="left:1162.96px;top:385.97px;font-size:21.3px;line-height:21.3px;color:#0d0d0d;transform:scaleX(0.9983);">20</div>
<div class="t" style="left:1194.18px;top:385.97px;font-size:21.3px;line-height:21.3px;color:#0d0d0d;transform:scaleX(0.8807);">%</div>
<div class="t" style="left:1218.43px;top:385.97px;font-size:21.3px;line-height:21.3px;color:#0d0d0d;transform:scaleX(1.0057);">applicable</div>
<div class="t" style="left:1322.48px;top:385.97px;font-size:21.3px;line-height:21.3px;color:#0d0d0d;transform:scaleX(0.9976);">sur</div>
<div class="t" style="left:633.00px;top:426.97px;font-size:21.3px;line-height:21.3px;color:#0d0d0d;transform:scaleX(1.0834);">toute</div>
<div class="t" style="left:690.78px;top:426.97px;font-size:21.3px;line-height:21.3px;color:#0d0d0d;transform:scaleX(0.9971);">la</div>
<div class="t" style="left:713.77px;top:426.97px;font-size:21.3px;line-height:21.3px;color:#0d0d0d;transform:scaleX(0.9965);">marchandise</div>
<div class="t" style="left:841.75px;top:426.97px;font-size:21.3px;line-height:21.3px;color:#0d0d0d;transform:scaleX(0.9984);">avant</div>
<div class="t" style="left:900.23px;top:426.97px;font-size:21.3px;line-height:21.3px;color:#0d0d0d;transform:scaleX(0.9582);">les</div>
<div class="t" style="left:932.78px;top:426.97px;font-size:21.3px;line-height:21.3px;color:#0d0d0d;transform:scaleX(0.9609);">taxes.</div>
<div class="t" style="left:993.84px;top:426.97px;font-size:21.3px;line-height:21.3px;color:#0d0d0d;transform:scaleX(1.0548);">Il</div>
<div class="t" style="left:1011.53px;top:426.97px;font-size:21.3px;line-height:21.3px;color:#0d0d0d;transform:scaleX(1.0672);">faut</div>
<div class="t" style="left:1055.91px;top:426.97px;font-size:21.3px;line-height:21.3px;color:#0d0d0d;transform:scaleX(1.1250);">tout</div>
<div class="t" style="left:1102.33px;top:426.97px;font-size:21.3px;line-height:21.3px;color:#0d0d0d;transform:scaleX(1.0074);">de</div>
<div class="t" style="left:1132.66px;top:426.97px;font-size:21.3px;line-height:21.3px;color:#0d0d0d;transform:scaleX(1.0222);">même</div>
<div class="t" style="left:1199.61px;top:426.97px;font-size:21.3px;line-height:21.3px;color:#0d0d0d;transform:scaleX(0.9951);">payer</div>
<div class="t" style="left:1259.09px;top:426.97px;font-size:21.3px;line-height:21.3px;color:#0d0d0d;transform:scaleX(0.9971);">la</div>
<div class="t" style="left:1282.08px;top:426.97px;font-size:21.3px;line-height:21.3px;color:#0d0d0d;transform:scaleX(0.9834);">taxe</div>
<div class="t" style="left:1328.13px;top:426.97px;font-size:21.3px;line-height:21.3px;color:#0d0d0d;transform:scaleX(1.0074);">de</div>
<div class="t" style="left:633.00px;top:467.97px;font-size:21.3px;line-height:21.3px;color:#0d0d0d;transform:scaleX(0.9983);">15</div>
<div class="t" style="left:661.93px;top:467.97px;font-size:21.3px;line-height:21.3px;color:#0d0d0d;transform:scaleX(0.9080);">%.</div>
<div class="t" style="left:689.77px;top:467.97px;font-size:21.3px;line-height:21.3px;color:#0d0d0d;transform:scaleX(0.9956);">Combien</div>
<div class="t" style="left:779.91px;top:467.97px;font-size:21.3px;line-height:21.3px;color:#0d0d0d;transform:scaleX(1.0794);">te</div>
<div class="t" style="left:804.36px;top:467.97px;font-size:21.3px;line-height:21.3px;color:#0d0d0d;transform:scaleX(1.0509);">couteront</div>
<div class="t" style="left:902.97px;top:467.97px;font-size:21.3px;line-height:21.3px;color:#0d0d0d;transform:scaleX(0.9960);">tes</div>
<div class="t" style="left:936.55px;top:467.97px;font-size:21.3px;line-height:21.3px;color:#0d0d0d;transform:scaleX(0.9752);">achats</div>
<div class="t" style="left:1003.03px;top:467.97px;font-size:21.3px;line-height:21.3px;color:#0d0d0d;transform:scaleX(0.9127);">?</div>
<div class="t" style="left:633.00px;top:795.97px;font-size:21.3px;line-height:21.3px;color:#0d0d0d;transform:scaleX(1.0016);">-Maëva</div>
<div class="t" style="left:712.80px;top:795.97px;font-size:21.3px;line-height:21.3px;color:#0d0d0d;transform:scaleX(1.0030);">décide</div>
<div class="t" style="left:784.41px;top:795.97px;font-size:21.3px;line-height:21.3px;color:#0d0d0d;transform:scaleX(1.0074);">de</div>
<div class="t" style="left:816.94px;top:795.97px;font-size:21.3px;line-height:21.3px;color:#0d0d0d;transform:scaleX(0.9875);">s’acheter</div>
<div class="t" style="left:910.94px;top:795.97px;font-size:21.3px;line-height:21.3px;color:#0d0d0d;transform:scaleX(1.0250);">l’album</div>
<div class="t" style="left:988.77px;top:795.97px;font-size:21.3px;line-height:21.3px;color:#0d0d0d;transform:scaleX(0.9782);">d’Adèle.</div>
<div class="t" style="left:1072.72px;top:795.97px;font-size:21.3px;line-height:21.3px;color:#0d0d0d;transform:scaleX(0.9491);">Elle</div>
<div class="t" style="left:1115.09px;top:795.97px;font-size:21.3px;line-height:21.3px;color:#0d0d0d;transform:scaleX(1.0233);">le</div>
<div class="t" style="left:1140.72px;top:795.97px;font-size:21.3px;line-height:21.3px;color:#0d0d0d;transform:scaleX(1.0483);">trouve</div>
<div class="t" style="left:1211.43px;top:795.97px;font-size:21.3px;line-height:21.3px;color:#0d0d0d;transform:scaleX(0.9434);">à</div>
<div class="t" style="left:1231.27px;top:795.97px;font-size:21.3px;line-height:21.3px;color:#0d0d0d;transform:scaleX(0.9967);">12,99</div>
<div class="t" style="left:1293.05px;top:795.97px;font-size:21.3px;line-height:21.3px;color:#0d0d0d;transform:scaleX(0.9957);">euros.</div>
<div class="t" style="left:633.00px;top:836.97px;font-size:21.3px;line-height:21.3px;color:#0d0d0d;transform:scaleX(0.9491);">Elle</div>
<div class="t" style="left:675.31px;top:836.97px;font-size:21.3px;line-height:21.3px;color:#0d0d0d;transform:scaleX(1.0246);">donne</div>
<div class="t" style="left:744.61px;top:836.97px;font-size:21.3px;line-height:21.3px;color:#0d0d0d;transform:scaleX(1.0348);">un</div>
<div class="t" style="left:777.73px;top:836.97px;font-size:21.3px;line-height:21.3px;color:#0d0d0d;transform:scaleX(1.0871);">billet</div>
<div class="t" style="left:833.95px;top:836.97px;font-size:21.3px;line-height:21.3px;color:#0d0d0d;transform:scaleX(1.0074);">de</div>
<div class="t" style="left:866.42px;top:836.97px;font-size:21.3px;line-height:21.3px;color:#0d0d0d;transform:scaleX(0.9983);">20</div>
<div class="t" style="left:898.68px;top:836.97px;font-size:21.3px;line-height:21.3px;color:#0d0d0d;transform:scaleX(0.9958);">euros</div>
<div class="t" style="left:960.34px;top:836.97px;font-size:21.3px;line-height:21.3px;color:#0d0d0d;transform:scaleX(0.9434);">à</div>
<div class="t" style="left:980.12px;top:836.97px;font-size:21.3px;line-height:21.3px;color:#0d0d0d;transform:scaleX(0.9971);">la</div>
<div class="t" style="left:1005.25px;top:836.97px;font-size:21.3px;line-height:21.3px;color:#0d0d0d;transform:scaleX(0.9861);">vendeuse.</div>
<div class="t" style="left:1110.78px;top:836.97px;font-size:21.3px;line-height:21.3px;color:#0d0d0d;transform:scaleX(0.9956);">Combien</div>
<div class="t" style="left:1204.25px;top:836.97px;font-size:21.3px;line-height:21.3px;color:#0d0d0d;transform:scaleX(0.9971);">la</div>
<div class="t" style="left:1229.39px;top:836.97px;font-size:21.3px;line-height:21.3px;color:#0d0d0d;transform:scaleX(0.9855);">vendeuse</div>
<div class="t" style="left:1329.03px;top:836.97px;font-size:21.3px;line-height:21.3px;color:#0d0d0d;transform:scaleX(1.0778);">lui</div>
<div class="t" style="left:633.00px;top:877.97px;font-size:21.3px;line-height:21.3px;color:#0d0d0d;transform:scaleX(1.0310);">rend</div>
<div class="t" style="left:682.23px;top:877.97px;font-size:21.3px;line-height:21.3px;color:#0d0d0d;transform:scaleX(1.0433);">t-elle</div>
<div class="t" style="left:735.68px;top:877.97px;font-size:21.3px;line-height:21.3px;color:#0d0d0d;transform:scaleX(0.9127);">?</div>
<div class="r" style="left:633px;top:405px;width:24px;height:1.5px;background:#8093d6;"></div>
<div class="r" style="left:633px;top:407.8px;width:24px;height:1.5px;background:#8093d6;"></div>
<div class="r" style="left:682.2px;top:897px;width:48.2px;height:1.5px;background:#8093d6;"></div>
<div class="r" style="left:682.2px;top:899.8px;width:48.2px;height:1.5px;background:#8093d6;"></div>
<div class="r" style="left:1502px;top:230px;width:23px;height:40px;background:#f8f8f8;box-sizing:border-box;border:1px solid #a6a6a6;border-left:none;border-radius:0 4px 4px 0;"></div>
<div class="r" style="left:481px;top:215px;width:1px;height:784px;background:#9a9a9a;"></div>
<div class="r" style="left:1502px;top:215px;width:1px;height:784px;background:#9a9a9a;"></div>
<div class="r" style="left:1905px;top:623px;width:7px;height:253px;background:#767676;border-radius:3.5px;"></div>
<div class="r" style="left:1919px;top:215px;width:1px;height:784px;background:#cdcdcd;"></div>
<div class="t" style="left:112.70px;top:1007.76px;font-size:15.64px;line-height:15.64px;color:#605e5c;transform:scaleX(0.8908);">Page 1 sur 2</div>
<div class="t" style="left:215.50px;top:1007.76px;font-size:15.64px;line-height:15.64px;color:#605e5c;transform:scaleX(0.9373);">173 mots</div>
<div class="t" style="left:299.30px;top:1007.76px;font-size:15.64px;line-height:15.64px;color:#605e5c;transform:scaleX(0.8879);">Français (Canada)</div>
<div class="t" style="left:437.50px;top:1007.76px;font-size:15.64px;line-height:15.64px;color:#605e5c;transform:scaleX(0.9437);">Saisie semi-automatique : Activé</div>
<div class="r" style="left:1270px;top:1014px;width:14px;height:2px;background:#6e6c6a;"></div>
<div class="r" style="left:1306px;top:1014px;width:118px;height:2px;background:#5f5e5d;"></div>
<div class="r" style="left:1329px;top:1006px;width:8px;height:18px;background:#5f5e5d;"></div>
<div class="r" style="left:1445px;top:1014px;width:14px;height:2px;background:#605e5c;"></div>
<div class="r" style="left:1451px;top:1008px;width:2px;height:14px;background:#605e5c;"></div>
<div class="t" style="left:1491.30px;top:1007.76px;font-size:15.64px;line-height:15.64px;color:#605e5c;transform:scaleX(0.8750);">100%</div>
<svg class="r" style="left:1545px;top:1006px" width="20" height="19" viewBox="0 0 20 19"><path d="M2 14.5 V1.3 H17.5 V14.5" fill="none" stroke="#605e5c" stroke-width="1.2"/><g stroke="#3a87c0" stroke-width="1.2" fill="none"><line x1="2" y1="17" x2="17.5" y2="17"/><polyline points="4.5,14.8 2.2,17 4.5,19.2"/><polyline points="15.2,14.8 17.4,17 15.2,19.2"/></g></svg>
<div class="t" style="left:1569.30px;top:1007.76px;font-size:15.64px;line-height:15.64px;color:#605e5c;transform:scaleX(0.9388);">Ajuster</div>
<div class="t" style="left:1638.30px;top:1007.76px;font-size:15.64px;line-height:15.64px;color:#605e5c;transform:scaleX(0.9451);">Envoyer des commentaires à Microsoft</div>
<svg class="r" style="left:19px;top:1045px" width="22" height="21" viewBox="0 0 22 21"><path d="M0 3 L9 1.8 V10 H0 Z M10 1.6 L21 0 V10 H10 Z M0 11 H9 V19.2 L0 18 Z M10 11 H21 V21 L10 19.4 Z" fill="#ffffff"/></svg>
<div class="r" style="left:60px;top:1030px;width:430px;height:50px;background:#3f3f3f;box-sizing:border-box;border:1px solid #666;border-bottom:none;"></div>
<svg class="r" style="left:74px;top:1044px" width="22" height="22" viewBox="0 0 22 22"><circle cx="14.1" cy="7.9" r="6.4" fill="none" stroke="#e8e8e8" stroke-width="1.4"/><line x1="9.6" y1="12.4" x2="1.5" y2="20.5" stroke="#e8e8e8" stroke-width="1.4"/></svg>
<div class="t" style="left:110.20px;top:1046.63px;font-size:18.16px;line-height:18.16px;color:#d6d6d6;transform:scaleX(1.0480);">Taper ici pour rechercher</div>
<svg class="r" style="left:509px;top:1044px" width="22" height="22" viewBox="0 0 22 22"><circle cx="11" cy="11" r="9" fill="none" stroke="#fff" stroke-width="2.2"/></svg>
<svg class="r" style="left:568px;top:1043px" width="24" height="24" viewBox="0 0 24 24"><g fill="none" stroke="#fff" stroke-width="1.5"><path d="M2.5 1.5 V5 H14.5 V1.5"/><rect x="2.5" y="7.5" width="12" height="8"/><path d="M2.5 22 V18 H14.5 V22"/><line x1="20.5" y1="1.5" x2="20.5" y2="22"/></g><rect x="18.8" y="8.2" width="3.4" height="3" fill="#fff"/></svg>
<svg class="r" style="left:629px;top:1042px" width="30" height="25" viewBox="0 0 30 25"><defs><linearGradient id="fg" x1="0" y1="0" x2="0" y2="1"><stop offset="0" stop-color="#ffe08a"/><stop offset="1" stop-color="#f7c948"/></linearGradient></defs><path d="M1 2.5 A1.5 1.5 0 0 1 2.5 1 H11 L13.5 3.5 H27.5 A1.5 1.5 0 0 1 29 5 V21.5 A1.5 1.5 0 0 1 27.5 23 H2.5 A1.5 1.5 0 0 1 1 21.5 Z" fill="#e3a727"/><path d="M1 6.5 H29 V21.5 A1.5 1.5 0 0 1 27.5 23 H2.5 A1.5 1.5 0 0 1 1 21.5 Z" fill="url(#fg)"/><path d="M6 24.5 V14 H24 V24.5 H19.8 V18 H10.2 V24.5 Z" fill="#5a9bd3"/></svg>
<svg class="r" style="left:690px;top:1039px" width="32" height="32" viewBox="0 0 32 32"><defs><linearGradient id="eg1" x1="0" y1="0.2" x2="1" y2="0.8"><stop offset="0" stop-color="#1c8fdc"/><stop offset="0.55" stop-color="#27b5cf"/><stop offset="1" stop-color="#5fd45a"/></linearGradient><linearGradient id="eg2" x1="0" y1="0" x2="1" y2="1"><stop offset="0" stop-color="#1a8ae0"/><stop offset="1" stop-color="#0b55a8"/></linearGradient></defs><path d="M1.5 15.5 C1.5 7 8 1 16 1 C24.5 1 31 7.5 31 15 C31 20.5 27 23 22.5 23 C18.5 23 16.5 20.5 17.5 17.5 C18.5 15 19 12.5 15 11 C10 9.5 3.5 12 1.5 15.5 Z" fill="url(#eg1)"/><path d="M1.5 15.5 C3.5 11.5 10 9.5 14.5 11 C10 13 9 17 10 21 C11.5 26 17 28.5 22 27.5 C24.5 27 26.5 26 28 24.5 C25.5 28.5 21 31 16 31 C7.5 31 1.5 24.5 1.5 15.5 Z" fill="url(#eg2)"/><circle cx="15.8" cy="15.5" r="3.3" fill="#111"/></svg>
<svg class="r" style="left:752px;top:1040px" width="32" height="30" viewBox="0 0 32 30"><path d="M1 9 L16 1 L31 9 V10 H1 Z" fill="#1565c0"/><rect x="1" y="9" width="30" height="20" fill="#2aa3e6"/><path d="M31 9 V29 H14 Z" fill="#1e90d8"/><path d="M3 10 H29 L16 18 Z" fill="#e9f6ff"/></svg>
<svg class="r" style="left:822px;top:1040px" width="16" height="31" viewBox="0 0 16 31"><g fill="#ffffff"><path d="M7.4 5.6 Q9.5 2.5 12.8 0 L10 9.8 Z"/><path d="M6.6 20.5 L8.6 25.2 Q5.5 27.8 2.2 29.8 Z"/><path d="M1 10.7 L6.8 5.3 L14.3 19 L8.4 24.3 Z" stroke="#111" stroke-width="0.9"/></g></svg>
<div class="r" style="left:862px;top:1030px;width:61px;height:50px;background:#2b2b2b;"></div>
<div class="r" style="left:862px;top:1077px;width:61px;height:3px;background:#76b9ed;"></div>
<svg class="r" style="left:875px;top:1040px" width="34" height="32" viewBox="0 0 34 32"><circle cx="17.5" cy="5.5" r="4.5" fill="#7b83eb"/><circle cx="26.8" cy="7" r="3.2" fill="#5b63d3"/><path d="M21 12 H31 V20 A5 5 0 0 1 21 20 Z" fill="#5b63d3"/><path d="M9 12 H25 V22 A8 8 0 0 1 9 22 Z" fill="#7b83eb"/><rect x="1.5" y="8.5" width="14" height="14" rx="1.2" fill="#4b53bc"/><path d="M4.5 11.8 H12.5 M8.5 11.8 V20" stroke="#fff" stroke-width="2.2"/><circle cx="26.3" cy="24" r="6.2" fill="#f3d046"/><polyline points="25.5,20.5 25.5,24.2 27.8,25.5" fill="none" stroke="#c58a00" stroke-width="1.1"/></svg>
<div class="r" style="left:929px;top:1077px;width:51px;height:3px;background:#76b9ed;"></div>
<svg class="r" style="left:939px;top:1040px" width="30" height="30" viewBox="0 0 30 30"><path d="M15.00 8.90 L27.16 8.90 A13.6 13.6 0 0 0 3.64 7.52 L9.72 18.05 A6.1 6.1 0 0 1 15.00 8.90 Z" fill="#db4437"/><path d="M20.28 18.05 L14.21 28.58 A13.6 13.6 0 0 0 27.16 8.90 L15.00 8.90 A6.1 6.1 0 0 1 20.28 18.05 Z" fill="#f6c530"/><path d="M9.72 18.05 L3.64 7.52 A13.6 13.6 0 0 0 14.21 28.58 L20.28 18.05 A6.1 6.1 0 0 1 9.72 18.05 Z" fill="#1da462"/><circle cx="15" cy="15" r="6.1" fill="#f4fbff"/><circle cx="15" cy="15" r="4.8" fill="#4a8af4"/></svg>
<div class="r" style="left:991px;top:1077px;width:51px;height:3px;background:#76b9ed;"></div>
<svg class="r" style="left:1003px;top:1040px" width="25" height="30" viewBox="0 0 25 30"><rect x="0" y="0" width="25" height="30" rx="1.5" fill="#6a7d8c"/><rect x="3" y="3" width="19" height="5" fill="#72c6f0"/><g fill="#c9d3dc"><rect x="3" y="11" width="5" height="4"/><rect x="10" y="11" width="5" height="4"/><rect x="17" y="11" width="5" height="4"/><rect x="3" y="17" width="5" height="4"/><rect x="10" y="17" width="5" height="4"/><rect x="3" y="23" width="5" height="4"/><rect x="10" y="23" width="5" height="4"/></g><rect x="17" y="17" width="5" height="10" fill="#1a5fa8"/></svg>
<svg class="r" style="left:1322px;top:1042px" width="32" height="28" viewBox="0 0 32 28"><circle cx="15" cy="14.8" r="11.8" fill="#1a93d6" stroke="#f2faff" stroke-width="2.6"/><path d="M11 11.2 A4.3 4.3 0 1 1 17.2 14.6 Q15.2 15.8 15.2 18.2" fill="none" stroke="#d4f1ff" stroke-width="3"/><circle cx="15.2" cy="22" r="1.8" fill="#d4f1ff"/><circle cx="25" cy="20" r="5.8" fill="#efad2a"/><rect x="24.2" y="17.2" width="1.7" height="6" fill="#fff6b0"/></svg>
<svg class="r" style="left:1375px;top:1039px" width="28" height="30" viewBox="0 0 28 30"><defs><linearGradient id="sg" x1="0" y1="0" x2="1" y2="1"><stop offset="0" stop-color="#fde17a"/><stop offset="1" stop-color="#f2a43a"/></linearGradient><linearGradient id="cg" x1="0" y1="0" x2="0" y2="1"><stop offset="0" stop-color="#c4e2f6"/><stop offset="1" stop-color="#e9f5fc"/></linearGradient></defs><circle cx="12.5" cy="12.5" r="11" fill="url(#sg)"/><path d="M4 27.8 A4.6 4.6 0 0 1 3.5 18.6 A7.6 7.6 0 0 1 17.5 15 A6 6 0 0 1 26.3 21 A3.6 3.6 0 0 1 23.5 27.8 Z" fill="url(#cg)"/></svg>
<div class="t" style="left:1416.00px;top:1047.63px;font-size:18.16px;line-height:18.16px;color:#ffffff;transform:scaleX(0.8351);">12°F</div>
<div class="t" style="left:1459.70px;top:1047.63px;font-size:18.16px;line-height:18.16px;color:#ffffff;transform:scaleX(0.9529);">Quelques nuag...</div>
<svg class="r" style="left:1618px;top:1049px" width="18" height="12" viewBox="0 0 18 12"><polyline points="1,10 9,2 17,10" fill="none" stroke="#fff" stroke-width="1.4"/></svg>
<svg class="r" style="left:1659px;top:1044px" width="18" height="22" viewBox="0 0 18 22"><g fill="none" stroke="#fff" stroke-width="1.3"><rect x="2.5" y="7" width="8.8" height="8.8" rx="2"/><path d="M11.3 10 L15.8 7.6 V15.2 L11.3 12.8"/><path d="M3.3 3.6 Q7.5 1.2 11.7 3.6"/><path d="M3.3 19.2 Q7.5 21.6 11.7 19.2"/></g></svg>
<svg class="r" style="left:1694px;top:1045px" width="24" height="22" viewBox="0 0 24 22"><g fill="#fff"><path d="M3.2 3.4 L7.7 0.7 L12.2 3.4 L7.7 6.1 Z"/><path d="M13.5 3.4 L18 0.7 L22.5 3.4 L18 6.1 Z"/><path d="M13.5 10 L18 7.3 L22.5 10 L18 12.7 Z"/><path d="M13.8 14.6 L16 13.4 L18.2 14.6 L16 15.8 Z"/></g><rect x="2.7" y="9.3" width="10.3" height="10.7" rx="2" fill="#c8102e"/><text x="5.2" y="18.3" font-size="9.5" font-weight="700" fill="#fff" font-family="Liberation Sans">1</text></svg>
<svg class="r" style="left:1740px;top:1043px" width="24" height="24" viewBox="0 0 24 24"><g fill="none" stroke="#fff" stroke-width="1.2" stroke-linejoin="round"><path d="M16 3.2 A1.6 1.6 0 0 1 18.9 4.6 L9.9 21.2 L7.6 21.8 L7.4 19.5 Z"/><path d="M5 21.5 Q1.6 20.6 2.6 17 Q3.8 14 7.8 14.3"/><path d="M15.6 10.3 Q20.8 8.4 21.4 11.6 Q21 14 17.2 13.4"/></g></svg>
<div class="t" style="left:1786.70px;top:1047.76px;font-size:15.64px;line-height:15.64px;color:#ffffff;transform:scaleX(0.8088);">FRA</div>
<div class="t" style="left:1850.00px;top:1035.76px;font-size:15.64px;line-height:15.64px;color:#ffffff;transform:scaleX(0.8764);">09:05</div>
<div class="t" style="left:1830.30px;top:1058.76px;font-size:15.64px;line-height:15.64px;color:#ffffff;transform:scaleX(0.9437);">2022-01-26</div>
<div class="r" style="left:1915px;top:1030px;width:1px;height:50px;background:#5a5a5a;"></div>
</body></html>
